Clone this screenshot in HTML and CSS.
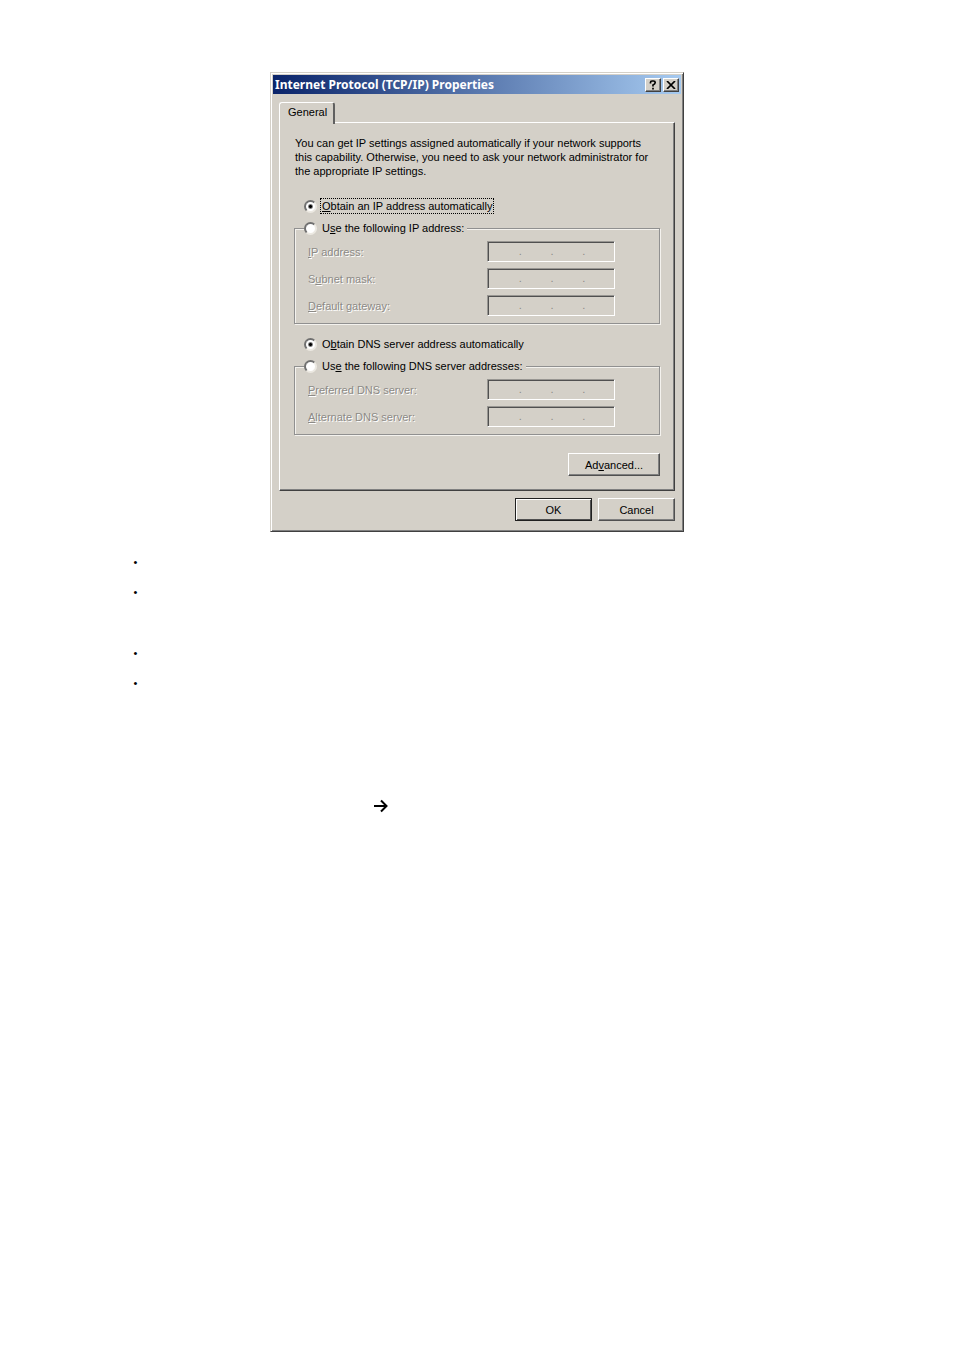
FILE: index.html
```html
<!DOCTYPE html>
<html lang="en">
<head>
    <meta charset="UTF-8">
    <meta name="viewport" content="width=device-width, initial-scale=1.0">
    <title>Internet Protocol (TCP/IP) Properties</title>
    <link rel="stylesheet" href="styles.css">
</head>
<body>
    <form class="dialog">
        <div class="title-bar">
            <h1>Internet Protocol (TCP/IP) Properties</h1>
            <button type="button" class="title-btn" aria-label="Help">
                <svg width="8" height="10" viewBox="0 0 8 10"><path d="M1.500 3.500V2.500Q1.500 1 3 1h1.500Q6.200 1 6.200 2.500T4 5v1.500M4 7.800v1.700" fill="none" stroke="#000" stroke-width="1.7"/></svg>
            </button>
            <button type="button" class="title-btn" aria-label="Close">
                <svg width="10" height="8" viewBox="0 0 10 8"><path d="M1 0l8 8M9 0L1 8" fill="none" stroke="#000" stroke-width="1.7"/></svg>
            </button>
        </div>

        <div class="content">
            <button type="button" class="tab">General</button>
            <div class="panel">
                <p class="intro">You can get IP settings assigned automatically if your network supports<br>this capability. Otherwise, you need to ask your network administrator for<br>the appropriate IP settings.</p>

                <div class="option">
                    <input type="radio" name="ip" id="ip-auto" checked>
                    <label for="ip-auto" class="focused"><u>O</u>btain an IP address automatically</label>
                </div>
                <fieldset class="group">
                    <legend class="option">
                        <input type="radio" name="ip" id="ip-manual">
                        <label for="ip-manual">U<u>s</u>e the following IP address:</label>
                    </legend>
                    <div class="row">
                        <label for="ip-1"><u>I</u>P address:</label>
                        <div class="ip-field">
                            <input id="ip-1" disabled>.<input aria-label="IP address part 2" disabled>.<input aria-label="IP address part 3" disabled>.<input aria-label="IP address part 4" disabled>
                        </div>
                    </div>
                    <div class="row">
                        <label for="mask-1">S<u>u</u>bnet mask:</label>
                        <div class="ip-field">
                            <input id="mask-1" disabled>.<input aria-label="Subnet mask part 2" disabled>.<input aria-label="Subnet mask part 3" disabled>.<input aria-label="Subnet mask part 4" disabled>
                        </div>
                    </div>
                    <div class="row">
                        <label for="gateway-1"><u>D</u>efault gateway:</label>
                        <div class="ip-field">
                            <input id="gateway-1" disabled>.<input aria-label="Default gateway part 2" disabled>.<input aria-label="Default gateway part 3" disabled>.<input aria-label="Default gateway part 4" disabled>
                        </div>
                    </div>
                </fieldset>

                <div class="option dns-option">
                    <input type="radio" name="dns" id="dns-auto" checked>
                    <label for="dns-auto">O<u>b</u>tain DNS server address automatically</label>
                </div>
                <fieldset class="group">
                    <legend class="option">
                        <input type="radio" name="dns" id="dns-manual">
                        <label for="dns-manual">Us<u>e</u> the following DNS server addresses:</label>
                    </legend>
                    <div class="row">
                        <label for="dns1-1"><u>P</u>referred DNS server:</label>
                        <div class="ip-field">
                            <input id="dns1-1" disabled>.<input aria-label="Preferred DNS part 2" disabled>.<input aria-label="Preferred DNS part 3" disabled>.<input aria-label="Preferred DNS part 4" disabled>
                        </div>
                    </div>
                    <div class="row">
                        <label for="dns2-1"><u>A</u>lternate DNS server:</label>
                        <div class="ip-field">
                            <input id="dns2-1" disabled>.<input aria-label="Alternate DNS part 2" disabled>.<input aria-label="Alternate DNS part 3" disabled>.<input aria-label="Alternate DNS part 4" disabled>
                        </div>
                    </div>
                </fieldset>

                <div class="actions">
                    <button type="button" class="btn btn-wide">Ad<u>v</u>anced...</button>
                </div>
            </div>
            <div class="actions footer">
                <button type="button" class="btn btn-default">OK</button>
                <button type="button" class="btn">Cancel</button>
            </div>
        </div>
    </form>

    <ul class="notes">
        <li></li>
        <li class="long"></li>
        <li></li>
        <li></li>
    </ul>

    <p class="arrow">
        <svg width="14" height="14" viewBox="0 0 14 14"><path d="M0 7h12M7 1.500L12.500 7 7 12.500" fill="none" stroke="#000" stroke-width="2"/></svg>
    </p>
</body>
</html>
```
FILE: styles.css
```css
* {
    margin: 0;
    padding: 0;
    box-sizing: border-box;
}

body {
    background-color: #fff;
    color: #000;
    font: 11px/14px 'Liberation Sans', Arial, sans-serif;
    padding-top: 72px;
}

button {
    font: inherit;
    color: inherit;
    background-color: #d4d0c8;
}

.dialog {
    max-width: 414px;
    margin: 0 auto;
    padding: 2px;
    background-color: #d4d0c8;
    border: 1px solid;
    border-color: #d4d0c8 #404040 #404040 #d4d0c8;
    box-shadow: inset 1px 1px #fff, inset -1px -1px #808080;
}

/* Title bar */
.title-bar {
    display: flex;
    align-items: center;
    height: 19px;
    padding: 0 2px;
    background: linear-gradient(to right, #0a246a, #a6caf0);
}

.title-bar h1 {
    flex: 1;
    color: #fff;
    font: bold 12px/18px 'Noto Sans', Tahoma, sans-serif;
}

.title-btn {
    display: flex;
    align-items: center;
    justify-content: center;
    width: 16px;
    height: 14px;
    margin-left: 2px;
    border: 1px solid;
    border-color: #fff #404040 #404040 #fff;
    box-shadow: inset -1px -1px #808080;
}

.content {
    padding: 8px 6px;
}

/* Tab overlaps the top edge of the panel */
.tab {
    display: block;
    position: relative;
    height: 22px;
    margin-bottom: -2px;
    padding: 0 6px 3px 8px;
    border: solid;
    border-width: 1px 2px 0 1px;
    border-color: #fff #606060 #fff #fff;
    border-radius: 3px 3px 0 0;
}

.panel {
    padding: 13px 14px 14px;
    border: 1px solid;
    border-color: #fff #404040 #404040 #fff;
    box-shadow: inset -1px -1px #808080;
}

.intro {
    margin-bottom: 20px;
    padding-left: 1px;
    white-space: nowrap;
}

/* Radio options */
.option {
    display: flex;
    align-items: center;
    gap: 4px;
    height: 16px;
    margin-left: 10px;
}

.option input {
    appearance: none;
    width: 13px;
    height: 13px;
    background-color: #fff;
    border: 2px solid;
    border-color: #707070 #ece9e2 #ece9e2 #707070;
    border-radius: 50%;
}

.option input:checked {
    background-image: radial-gradient(circle, #000 1px, #fff 3px);
}

.option label {
    padding: 0 1px;
}

.option .focused {
    outline: 1px dotted #000;
}

.dns-option {
    margin-top: 12px;
}

/* Etched group boxes */
.group {
    margin-top: 6px;
    padding: 5px 44px 7px 13px;
    border: 1px solid #909090;
    box-shadow: inset 1px 1px #f4f2ee, 1px 1px #f4f2ee;
}

.group legend {
    margin-left: -4px;
    padding-right: 2px;
    background-color: #d4d0c8;
}

.row {
    display: flex;
    align-items: center;
    justify-content: space-between;
    color: #8c8a86;
    text-shadow: 1px 1px #fff;
}

.row + .row {
    margin-top: 6px;
}

.ip-field {
    display: flex;
    width: 128px;
    height: 21px;
    padding-left: 2px;
    border: 1px solid;
    border-color: #989692 #fff #fff #989692;
    box-shadow: inset 1px 1px #505050;
    line-height: 18px;
    text-shadow: none;
}

.ip-field input {
    flex: 1;
    min-width: 0;
    border: 0;
    background: none;
}

/* Buttons */
.actions {
    display: flex;
    justify-content: flex-end;
    gap: 6px;
    margin-top: 18px;
}

.footer {
    margin-top: 7px;
}

.btn {
    width: 77px;
    height: 23px;
    border: 1px solid;
    border-color: #fff #505050 #505050 #fff;
    box-shadow: inset -1px -1px #808080;
}

.btn-wide {
    width: 92px;
}

.btn-default {
    border-color: #202020;
    box-shadow: inset 1px 1px #fff, inset -1px -1px #505050;
}

/* Notes below the dialog */
.notes {
    margin-top: 15px;
    padding-left: 14%;
    list-style: none;
}

.notes li {
    height: 30px;
    line-height: 30px;
}

.notes li::before {
    content: "•";
}

.notes .long {
    margin-bottom: 31px;
}

.arrow {
    margin-top: 101px;
    padding-left: 39.2%;
}

.arrow svg {
    display: block;
}
```
